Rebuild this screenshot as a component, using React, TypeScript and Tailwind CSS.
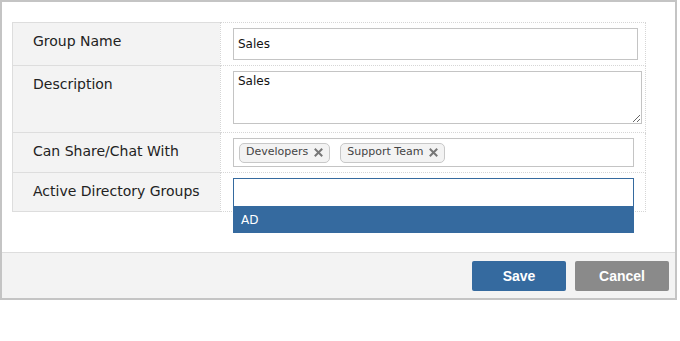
import { useState } from "react";

const font = { fontFamily: '"DejaVu Sans", Verdana, sans-serif' };

function TagX() {
  return (
    <svg width="9" height="9" viewBox="0 0 9 9" className="ml-[6px]">
      <path d="M1.5 1.5 L7.5 7.5 M7.5 1.5 L1.5 7.5" stroke="#777" strokeWidth="2" strokeLinecap="square" />
    </svg>
  );
}

function Tag({ label }: { label: string }) {
  return (
    <span className="flex h-[20px] items-center rounded-[5px] border border-[#c8c8c8] bg-[#f3f3f3] pl-[6px] pr-[6px] text-[11px] text-[#444]">
      {label}
      <TagX />
    </span>
  );
}

function Row({
  label,
  first,
  children,
  height,
}: {
  label: string;
  first?: boolean;
  children: React.ReactNode;
  height: string;
}) {
  return (
    <div className={`flex ${height}`}>
      <div
        className={`w-[208px] shrink-0 border-b border-l border-[#ddd] bg-[#f3f3f3] pl-[20px] pt-[10px] text-[14px] leading-[17px] text-[#222] ${
          first ? "border-t" : ""
        }`}
      >
        {label}
      </div>
      <div
        className={`relative w-[426px] border-b border-l border-r border-dotted border-[#d6d6d6] pl-[12px] pt-[5px] ${
          first ? "border-t" : ""
        }`}
      >
        {children}
      </div>
    </div>
  );
}

export default function App() {
  const [name, setName] = useState("Sales");
  const [desc, setDesc] = useState("Sales");

  return (
    <div style={font} className="h-[341px] w-[680px] bg-white">
      <div className="flex h-[300px] w-[677px] flex-col border-2 border-[#c4c4c4]">
        <div className="h-[250px] pl-[10px] pt-[20px]">
          <Row label="Group Name" first height="h-[44px]">
            <input
              value={name}
              onChange={(e) => setName(e.target.value)}
              className="h-[32px] w-[405px] border border-[#c4c4c4] px-[4px] text-[12px] text-[#111] outline-none"
            />
          </Row>
          <Row label="Description" height="h-[67px]">
            <textarea
              value={desc}
              onChange={(e) => setDesc(e.target.value)}
              className="block h-[53px] w-[409px] border border-[#c4c4c4] px-[4px] pt-[2px] text-[12px] leading-[15px] text-[#111] outline-none"
            />
          </Row>
          <Row label="Can Share/Chat With" height="h-[40px]">
            <div className="flex h-[29px] w-[401px] items-center gap-[10px] border border-[#c4c4c4] pl-[5px]">
              <Tag label="Developers" />
              <Tag label="Support Team" />
            </div>
          </Row>
          <Row label="Active Directory Groups" height="h-[39px]">
            <input className="h-[29px] w-[401px] border border-[#356a9f] text-[12px] outline-none" />
            <div className="absolute left-[12px] top-[34px] z-10 flex h-[26px] w-[401px] items-center bg-[#356a9f] pl-[8px] text-[12px] text-white">
              AD
            </div>
          </Row>
        </div>
        <div className="flex flex-1 items-start justify-end gap-[9px] border-t border-[#ddd] bg-[#f3f3f3] pr-[6px] pt-[8px]">
          <button
            type="button"
            style={{ fontFamily: '"Liberation Sans", Arial, sans-serif' }}
            className="h-[30px] w-[94px] rounded-[2px] bg-[#356a9f] text-[14px] font-bold text-white"
          >
            Save
          </button>
          <button
            type="button"
            style={{ fontFamily: '"Liberation Sans", Arial, sans-serif' }}
            className="h-[30px] w-[94px] rounded-[2px] bg-[#8a8a8a] text-[14px] font-bold text-white"
          >
            Cancel
          </button>
        </div>
      </div>
    </div>
  );
}
